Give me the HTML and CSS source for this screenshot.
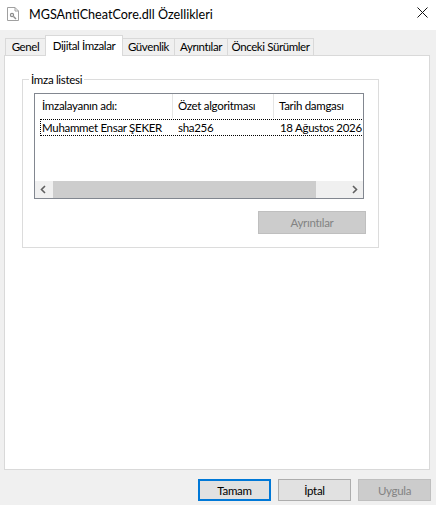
FILE: index.html
```html
<!DOCTYPE html>
<html lang="tr">
<head>
<meta charset="utf-8">
<title>MGSAntiCheatCore.dll Özellikleri</title>
<link rel="stylesheet" href="styles.css">
</head>
<body>
<div class="window">
  <div class="titlebar">
    <svg class="app-icon" width="12" height="14" viewBox="0 0 12 14">
      <path d="M0.5 0.5 H8 L11.5 4 V13.5 H0.5 Z" fill="#fff" stroke="#a0a0a0"/>
      <path d="M8 0.5 V4 H11.5" fill="none" stroke="#a0a0a0"/>
      <circle cx="5" cy="8" r="2.2" fill="#8c8c8c"/>
      <circle cx="5" cy="8" r="0.9" fill="#fff"/>
      <path d="M6.5 9.5 L9 12" stroke="#8c8c8c" stroke-width="1.4"/>
    </svg>
    <span class="title">MGSAntiCheatCore.dll Özellikleri</span>
    <svg class="close" width="11" height="11" viewBox="0 0 11 11">
      <path d="M0.5 0.5 L10.5 10.5 M10.5 0.5 L0.5 10.5" stroke="#111" stroke-width="1"/>
    </svg>
  </div>

  <div class="content">
    <div class="tabs">
      <div class="tab tab-general">Genel</div>
      <div class="tab tab-active tab-signatures">Dijital İmzalar</div>
      <div class="tab tab-security">Güvenlik</div>
      <div class="tab tab-details">Ayrıntılar</div>
      <div class="tab tab-versions">Önceki Sürümler</div>
    </div>

    <div class="panel">
      <fieldset class="group">
        <legend>İmza listesi</legend>
        <div class="listview">
          <div class="lv-header">
            <div class="hcell h1">İmzalayanın adı:</div>
            <div class="hcell h2">Özet algoritması</div>
            <div class="hcell h3">Tarih damgası</div>
          </div>
          <div class="lv-row">
            <div class="cell c1">Muhammet Ensar ŞEKER</div>
            <div class="cell c2">sha256</div>
            <div class="cell c3">18 Ağustos 2026</div>
          </div>
          <div class="lv-fill"></div>
          <div class="hscroll">
            <div class="sb-arrow">
              <svg width="17" height="17" viewBox="0 0 17 17"><path d="M10 5 L6.5 8.5 L10 12" fill="none" stroke="#606060" stroke-width="1.6"/></svg>
            </div>
            <div class="sb-thumb"></div>
            <div class="sb-track"></div>
            <div class="sb-arrow">
              <svg width="17" height="17" viewBox="0 0 17 17"><path d="M7 5 L10.5 8.5 L7 12" fill="none" stroke="#606060" stroke-width="1.6"/></svg>
            </div>
          </div>
        </div>
        <div class="group-actions">
          <button class="btn btn-wide" disabled>Ayrıntılar</button>
        </div>
      </fieldset>
    </div>

    <div class="footer">
      <button class="btn btn-default">Tamam</button>
      <button class="btn">İptal</button>
      <button class="btn" disabled>Uygula</button>
    </div>
  </div>
</div>
</body>
</html>
```

FILE: styles.css
```css
* {
  box-sizing: border-box;
}

html, body {
  margin: 0;
  padding: 0;
}

body {
  background: #f0f0f0;
  font-family: Lato, "Liberation Sans", Arial, sans-serif;
  font-size: 11.5px;
  letter-spacing: -0.3px;
  color: #000;
  width: 436px;
  height: 505px;
  overflow: hidden;
}

.window {
  width: 436px;
  height: 505px;
  display: flex;
  flex-direction: column;
}

/* Title bar */
.titlebar {
  height: 30px;
  background: #fff;
  display: flex;
  align-items: center;
  padding: 0 8px 2px 7px;
}

.app-icon {
  margin-right: 10px;
}

.title {
  flex: 1;
  font-size: 12.6px;
  letter-spacing: 0;
}

.close {
  margin-top: -3px;
}

/* Tabs */
.content {
  flex: 1;
  display: flex;
  flex-direction: column;
  padding-left: 4px;
}

.tabs {
  height: 25px;
  display: flex;
  align-items: flex-end;
  padding-left: 1px;
}

.tab {
  height: 17px;
  line-height: 16px;
  text-align: center;
  background: #f0f0f0;
  border: 1px solid #d9d9d9;
  border-bottom: none;
  margin-right: -1px;
  white-space: nowrap;
  letter-spacing: -0.4px;
}

.tab-general { width: 41px; }
.tab-signatures { width: 78px; }
.tab-security { width: 53px; }
.tab-details { width: 54px; }
.tab-versions { width: 87px; }

.tab-active {
  position: relative;
  z-index: 1;
  height: 21px;
  line-height: 19px;
  background: #fff;
  margin-bottom: -1px;
}

/* Tab page */
.panel {
  width: 426px;
  height: 415px;
  background: #fff;
  border: 1px solid #d9d9d9;
}

.group {
  width: 357px;
  margin: 16px 0 0 17px;
  padding: 6px 12px 13px 11px;
  border: 1px solid #dcdcdc;
  min-width: 0;
}

.group legend {
  padding: 0 2px;
  margin-left: -5px;
  line-height: 15px;
}

/* List view */
.listview {
  width: 330px;
  height: 106px;
  border: 1px solid #828790;
  background: #fff;
  display: flex;
  flex-direction: column;
  overflow: hidden;
}

.lv-header {
  height: 24px;
  display: flex;
  flex-shrink: 0;
}

.hcell {
  line-height: 24px;
  border-right: 1px solid #e5e5e5;
  white-space: nowrap;
  overflow: hidden;
  flex-shrink: 0;
}

.h1 {
  width: 138px;
  padding-left: 7px;
}

.h2 {
  width: 101px;
  padding-left: 5px;
}

.h3 {
  width: 120px;
  padding-left: 5px;
  border-right: none;
}

.lv-row {
  margin: 1px 0 0 5px;
  height: 17px;
  width: 360px;
  flex-shrink: 0;
  display: flex;
  border: 1px dotted #000;
}

.cell {
  line-height: 15px;
  white-space: nowrap;
  flex-shrink: 0;
}

.c1 {
  width: 131px;
  padding-left: 1px;
}

.c2 {
  width: 101px;
  padding-left: 6px;
}

.c3 {
  width: 120px;
  padding-left: 7px;
}

.lv-fill {
  flex: 1;
}

.hscroll {
  height: 17px;
  flex-shrink: 0;
  display: flex;
  background: #f0f0f0;
}

.sb-arrow {
  width: 17px;
  height: 17px;
  flex-shrink: 0;
}

.sb-arrow svg {
  display: block;
}

.sb-thumb {
  width: 263px;
  margin-left: 1px;
  background: #cdcdcd;
  flex-shrink: 0;
}

.sb-track {
  flex: 1;
}

.group-actions {
  display: flex;
  justify-content: flex-end;
  margin-top: 12px;
}

/* Buttons */
.btn {
  width: 73px;
  height: 22px;
  padding: 0;
  font-family: inherit;
  font-size: 11.5px;
  letter-spacing: -0.3px;
  color: #000;
  background: #e1e1e1;
  border: 1px solid #adadad;
  border-radius: 0;
}

.btn-wide {
  width: 108px;
  height: 23px;
}

.btn-default {
  border-color: #0078d7;
  box-shadow: inset 0 0 0 1px #0078d7;
}

.btn:disabled {
  background: #cccccc;
  border-color: #bfbfbf;
  color: #838383;
}

.footer {
  display: flex;
  justify-content: flex-end;
  gap: 7px;
  padding: 9px 5px 0 0;
}
```
